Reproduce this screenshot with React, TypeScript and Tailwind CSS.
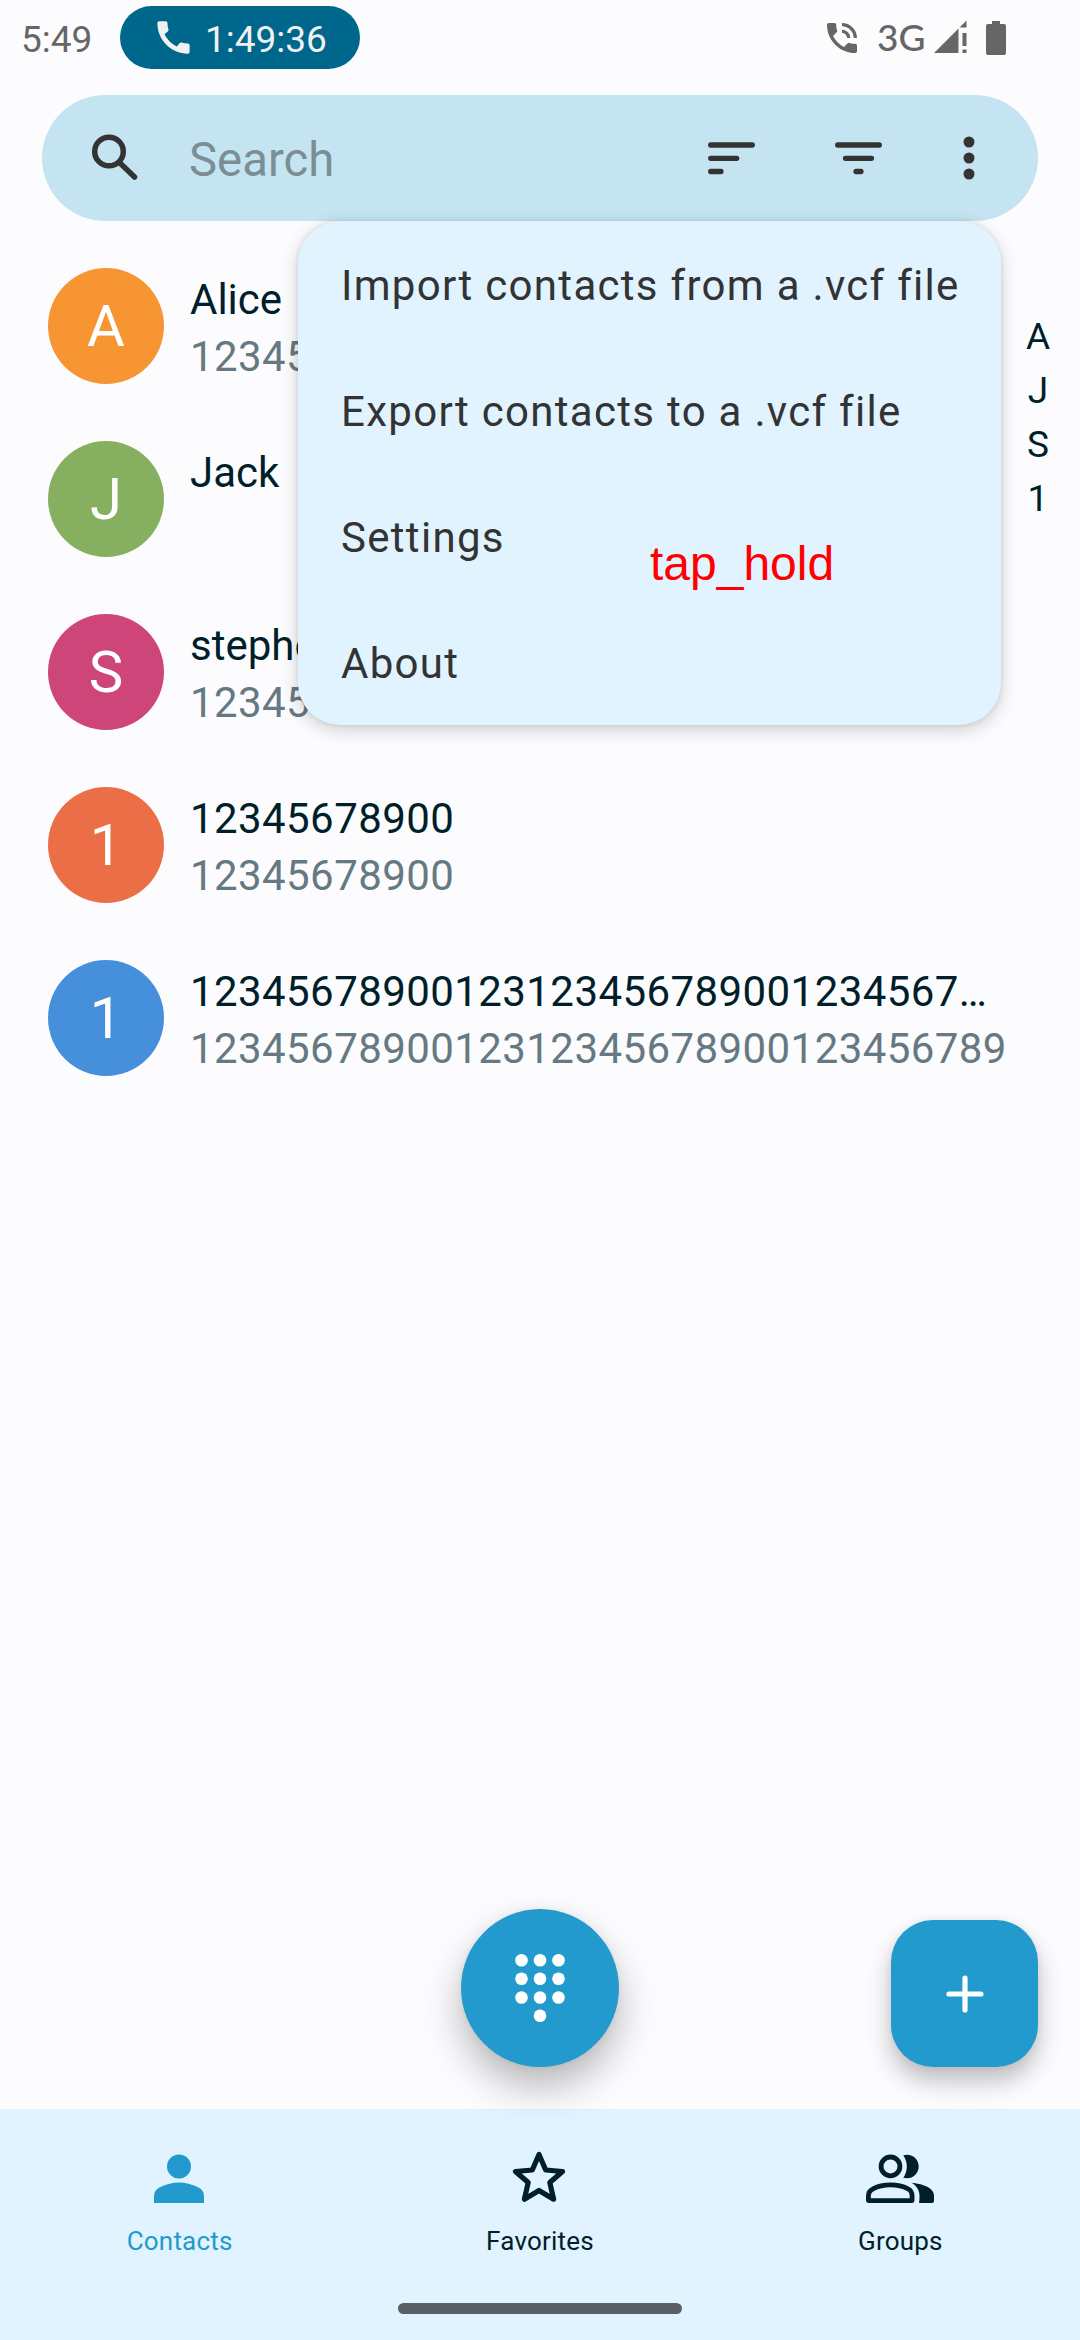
import React from "react";

type Contact = { letter: string; color: string; name: string; phone?: string };

const contacts: Contact[] = [
  { letter: "A", color: "bg-[#f79533]", name: "Alice", phone: "12345678900" },
  { letter: "J", color: "bg-[#86b05f]", name: "Jack" },
  { letter: "S", color: "bg-[#cd4579]", name: "stephen", phone: "12345678900" },
  { letter: "1", color: "bg-[#eb6e47]", name: "12345678900", phone: "12345678900" },
  {
    letter: "1",
    color: "bg-[#468fdb]",
    name: "12345678900123123456789001234567…",
    phone: "1234567890012312345678900123456789",
  },
];

const menuItems = ["Import contacts from a .vcf file", "Export contacts to a .vcf file", "Settings", "About"];

function StatusBar() {
  return (
    <div className="flex h-[95px] items-start pt-1.5 text-[37px] leading-[63px] text-[#666]">
      <span className="ml-[21px] w-[99px] pt-[2px] whitespace-nowrap">5:49</span>
      <div className="flex h-[63px] w-60 items-center rounded-full bg-[#00678c] pl-8 text-[#f1f1f1]">
        <svg viewBox="0 0 24 24" className="mb-[1px] h-[43px] w-[43px]" fill="currentColor">
          <path d="M20.01 15.38c-1.23 0-2.42-.2-3.53-.56a.977.977 0 0 0-1.01.24l-1.57 1.97c-2.83-1.35-5.48-3.9-6.89-6.83l1.95-1.66c.27-.28.35-.67.24-1.02-.37-1.11-.56-2.3-.56-3.53 0-.54-.45-.99-.99-.99H4.19C3.65 3 3 3.24 3 3.99 3 13.28 10.73 21 20.01 21c.71 0 .99-.63.99-1.18v-3.45c0-.54-.45-.99-.99-.99z" />
        </svg>
        <span className="ml-2.5 pt-[3px]">1:49:36</span>
      </div>
      <div className="ml-[462px] flex h-[63px] items-center">
        <svg viewBox="0 0 24 24" className="h-10 w-10" fill="currentColor">
          <path d="M20 15.5c-1.25 0-2.45-.2-3.57-.57a1.02 1.02 0 0 0-1.02.24l-2.2 2.2a15.045 15.045 0 0 1-6.59-6.59l2.2-2.21a.96.96 0 0 0 .25-1A11.36 11.36 0 0 1 8.5 4c0-.55-.45-1-1-1H4c-.55 0-1 .45-1 1 0 9.39 7.61 17 17 17 .55 0 1-.45 1-1v-3.5c0-.55-.45-1-1-1zM19 12h2a9 9 0 0 0-9-9v2c3.87 0 7 3.13 7 7zm-4 0h2c0-2.76-2.24-5-5-5v2c1.66 0 3 1.34 3 3z" />
        </svg>
        <span className="ml-[15px] w-[57px] pb-[2px] font-[Lato,sans-serif] font-medium">3G</span>
        <svg viewBox="0 0 33 33" className="mb-[2px] h-[33px] w-[33px]" fill="currentColor">
          <path d="M0 33L24.500 8.500V33zM25.500 7.500L32.500 0.500V7.500zM28.500 13H32.500V26H28.500zM28.500 29.500H32.500V33H28.500z" />
        </svg>
        <svg viewBox="0 0 20 34" className="ml-[19px] h-[34px] w-5" fill="currentColor">
          <path d="M6 0H14V3H18Q20 3 20 5V32Q20 34 18 34H2Q0 34 0 32V5Q0 3 2 3H6z" />
        </svg>
      </div>
    </div>
  );
}

function SearchBar() {
  return (
    <div className="mx-[42px] flex h-[126px] items-center rounded-full bg-[#c4e4f1] text-[#333]">
      <svg viewBox="0 0 46 46" className="mb-[2px] ml-[50px] h-[46px] w-[46px]" fill="none" stroke="currentColor" strokeWidth="5.500">
        <circle cx="17" cy="17.500" r="14.300" />
        <path d="M29 30L42.500 43" strokeLinecap="round" />
      </svg>
      <span className="ml-[51px] w-[519px] pt-[6px] text-[47.300px] leading-none text-[#7b8e96]">Search</span>
      <svg viewBox="0 0 47 33" className="h-[33px] w-[47px]" fill="none" stroke="currentColor" strokeWidth="5.300" strokeLinecap="round">
        <path d="M2.700 3H44.300M2.700 16.300H28.700M2.700 29.500H13" />
      </svg>
      <svg viewBox="0 0 47 33" className="ml-20 h-[33px] w-[47px]" fill="none" stroke="currentColor" strokeWidth="5.300" strokeLinecap="round">
        <path d="M2.700 3H44.300M10.500 16.300H36.500M21 29.500H26" />
      </svg>
      <svg viewBox="0 0 12 44" className="ml-[81px] h-11 w-3" fill="currentColor">
        <circle cx="6" cy="6" r="5.500" />
        <circle cx="6" cy="22" r="5.500" />
        <circle cx="6" cy="38" r="5.500" />
      </svg>
    </div>
  );
}

function OverflowMenu() {
  return (
    <div className="absolute top-[221px] left-[298px] z-10 h-[504px] w-[703px] rounded-[42px] bg-[#e0f3ff] shadow-[0_5px_18px_rgba(0,0,0,0.18),0_0_5px_rgba(0,0,0,0.1)]">
      {menuItems.map((item) => (
        <div key={item} className="flex h-[126px] items-center pt-[3px] pl-[43px] text-[42px] tracking-[1.300px] whitespace-nowrap text-[#333]">
          {item}
        </div>
      ))}
      <span className="absolute top-[316px] left-[352px] font-['Liberation_Sans',sans-serif] text-[48px] leading-[54px] text-[#ff0000]">
        tap_hold
      </span>
    </div>
  );
}

function ContactRow({ contact }: { contact: Contact }) {
  const numeric = /^\d/.test(contact.name);
  return (
    <div className="flex h-[173px] items-center pl-12">
      <div className={`mb-[1px] flex h-[116px] w-[116px] items-center justify-center rounded-full text-[58px] leading-none text-white ${contact.color}`}>
        {contact.letter}
      </div>
      <div className="ml-[26px] h-[111px] text-[42px] leading-[57px] tracking-[0.420px] whitespace-nowrap">
        <div className={numeric ? "text-[#001f2a]" : "tracking-normal text-[#001f2a]"}>{contact.name}</div>
        {contact.phone && <div className="text-[#667982]">{contact.phone}</div>}
      </div>
    </div>
  );
}

function NavItem({ label, active, children }: { label: string; active?: boolean; children: React.ReactNode }) {
  return (
    <div className={`flex w-[360px] flex-col items-center pt-[38px] ${active ? "text-[#229acd]" : "text-[#001f2a]"}`}>
      {children}
      <span className="mt-[16px] text-[26px] leading-[30px] tracking-[0.200px]">{label}</span>
    </div>
  );
}

export default function App() {
  return (
    <div className="relative flex h-[2340px] w-[1080px] flex-col overflow-hidden bg-[#fcfcff] font-[Roboto,sans-serif]">
      <StatusBar />
      <SearchBar />
      <OverflowMenu />
      <main className="flex flex-1 justify-between pt-[19px]">
        <div className="w-[1010px] shrink-0">
          {contacts.map((c, i) => (
            <ContactRow key={i} contact={c} />
          ))}
        </div>
        <div className="mt-[70px] mr-[21px] w-[42px] text-center text-[37px] leading-[54px] text-[#001f2a]">
          {["A", "J", "S", "1"].map((l) => (
            <div key={l}>{l}</div>
          ))}
        </div>
      </main>
      <button className="absolute top-[1909px] left-[461px] z-10 flex h-[158px] w-[158px] items-center justify-center rounded-full bg-[#229acd] shadow-[0_20px_38px_rgba(0,0,0,0.27),0_0_10px_rgba(0,0,0,0.06)]">
        <svg viewBox="0 0 50 68" className="h-[68px] w-[50px]" fill="white">
          {[6.3, 24.8, 43.5].map((y) =>
            [6.5, 25, 43.5].map((x) => <circle key={`${x}-${y}`} cx={x} cy={y} r="6.300" />)
          )}
          <circle cx="25" cy="61.800" r="6.300" />
        </svg>
      </button>
      <button className="absolute top-[1920px] left-[891px] z-10 flex h-[147px] w-[147px] items-center justify-center rounded-[42px] bg-[#229acd] shadow-[0_14px_24px_rgba(0,0,0,0.25),0_0_8px_rgba(0,0,0,0.06)]">
        <svg viewBox="0 0 38 38" className="h-[38px] w-[38px]" fill="none" stroke="white" strokeWidth="5.200" strokeLinecap="round">
          <path d="M3 19H35M19 3V35" />
        </svg>
      </button>
      <nav className="flex h-[231px] flex-col bg-[#e0f3ff]">
        <div className="flex h-[194px] gap-px">
          <NavItem label="Contacts" active>
            <svg viewBox="0 0 70 63" className="h-[63px] w-[70px]" fill="currentColor">
              <circle cx="34" cy="19.500" r="12" />
              <path d="M9 56V49C9 45 11 42.500 14.500 40.500C20 37.500 27 35.500 34 35.500S48 37.500 53.500 40.500C57 42.500 59 45 59 49V56z" />
            </svg>
          </NavItem>
          <NavItem label="Favorites">
            <svg viewBox="0 0 70 63" className="h-[63px] w-[70px]" fill="none" stroke="currentColor" strokeWidth="5.200" strokeLinejoin="round">
              <path d="M34 7.500L40.700 23L57.500 24.500L44.800 35.500L48.600 52.200L34 43.400L19.400 52.200L23.200 35.500L10.500 24.500L27.300 23z" />
            </svg>
          </NavItem>
          <NavItem label="Groups">
            <svg viewBox="0 0 70 63" className="h-[63px] w-[70px]" fill="none" stroke="currentColor" strokeWidth="4.800">
              <circle cx="25.500" cy="19.400" r="9.400" />
              <path d="M3.400 53.600V49C3.400 45.500 4.500 43.500 8 41.800C13 39.200 19 37.900 25.500 37.900S38 39.200 43 41.800C46.500 43.500 47.100 45.500 47.100 49V53.600z" strokeLinejoin="round" />
              <path
                d="M38.300 8.200C47 5.800 53.700 12 53.700 19.400S47 33 38.300 30.800C43 24 43 15 38.300 8.200zM46.500 35.800C57 37 69 40.500 69 48.500V54Q69 56 67 56H54C54.500 54 54.500 51 54.500 48.500C54.500 43 51 38.500 46.500 35.800z"
                fill="currentColor"
                stroke="none"
              />
            </svg>
          </NavItem>
        </div>
        <div className="mx-auto h-[11px] w-[284px] rounded-full bg-[#5a6066]" />
      </nav>
    </div>
  );
}
